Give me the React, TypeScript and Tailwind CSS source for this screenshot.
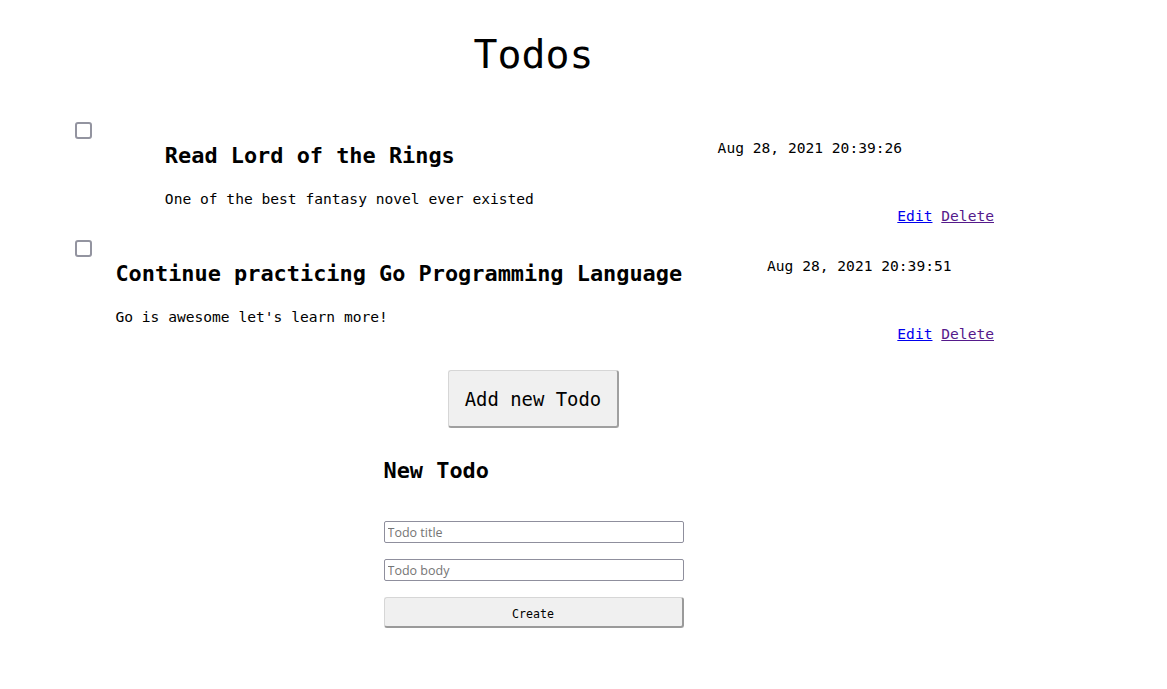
const todos = [
  {
    title: "Read Lord of the Rings",
    body: "One of the best fantasy novel ever existed",
    date: "Aug 28, 2021 20:39:26",
  },
  {
    title: "Continue practicing Go Programming Language",
    body: "Go is awesome let's learn more!",
    date: "Aug 28, 2021 20:39:51",
  },
]

function TodoItem({ todo, first }: { todo: (typeof todos)[number]; first: boolean }) {
  return (
    <div className={first ? "" : "mt-[17px]"}>
      <div className="grid">
        <span className="col-start-1 row-start-1 ml-[2px] w-[17px] h-[17px] border-2 border-[#9394a0] rounded-[3px] bg-white" />
        <div className="col-start-1 row-start-1 flex justify-around items-start">
          <div className="pt-[20px]">
            <h2 className="text-[21.9px] font-bold leading-[28px]">{todo.title}</h2>
            <p className="mt-[19px] leading-[19px]">{todo.body}</p>
          </div>
          <p className="pt-[16px] leading-[19px]">{todo.date}</p>
        </div>
      </div>
      <div className="flex justify-end gap-[8.8px] leading-[15px]">
        <a href="#" className="underline text-[#0000ee]">Edit</a>
        <a href="#" className="underline text-[#551a8b]">Delete</a>
      </div>
    </div>
  )
}

export default function App() {
  return (
    <div
      className="min-h-screen bg-white text-black text-[14.6px]"
      style={{ fontFamily: '"DejaVu Sans Mono", "Liberation Mono", monospace' }}
    >
      <div className="ml-[73px] w-[921px] pt-[30px]">
        <h1 className="text-center text-[39.8px] font-normal leading-[48px]">Todos</h1>
        <div className="mt-[44px]">
          {todos.map((todo, idx) => (
            <TodoItem key={idx} todo={todo} first={idx === 0} />
          ))}
        </div>
        <div className="flex justify-center mt-[29px]">
          <button className="h-[58px] px-[16px] pt-[1px] text-[18.9px] bg-[#f0f0f0] border border-[#d6d6d6] border-r-[#a0a0a0] border-b-[#a0a0a0] border-r-2 border-b-2 rounded-[3px]">
            Add new Todo
          </button>
        </div>
        <div className="mx-auto w-[300px] mt-[29px]">
          <h2 className="text-[21.9px] font-bold leading-[28px]">New Todo</h2>
          <form className="flex flex-col mt-[36px]" style={{ fontFamily: '"Open Sans", "Noto Sans", sans-serif' }}>
            <input
              placeholder="Todo title"
              className="h-[22px] px-[3px] text-[12.5px] border border-[#8f8f9d] rounded-[2px] placeholder:text-[#757575] outline-none"
            />
            <input
              placeholder="Todo body"
              className="mt-[16px] h-[22px] px-[3px] text-[12.5px] border border-[#8f8f9d] rounded-[2px] placeholder:text-[#757575] outline-none"
            />
            <button
              type="button"
              className="mt-[16px] h-[31px] pt-[6px] text-[11.6px] bg-[#f0f0f0] border border-[#d6d6d6] border-r-[#9a9a9a] border-b-[#9a9a9a] border-r-2 border-b-2 rounded-[3px]"
              style={{ fontFamily: '"DejaVu Sans Mono", monospace' }}
            >
              Create
            </button>
          </form>
        </div>
      </div>
    </div>
  )
}
